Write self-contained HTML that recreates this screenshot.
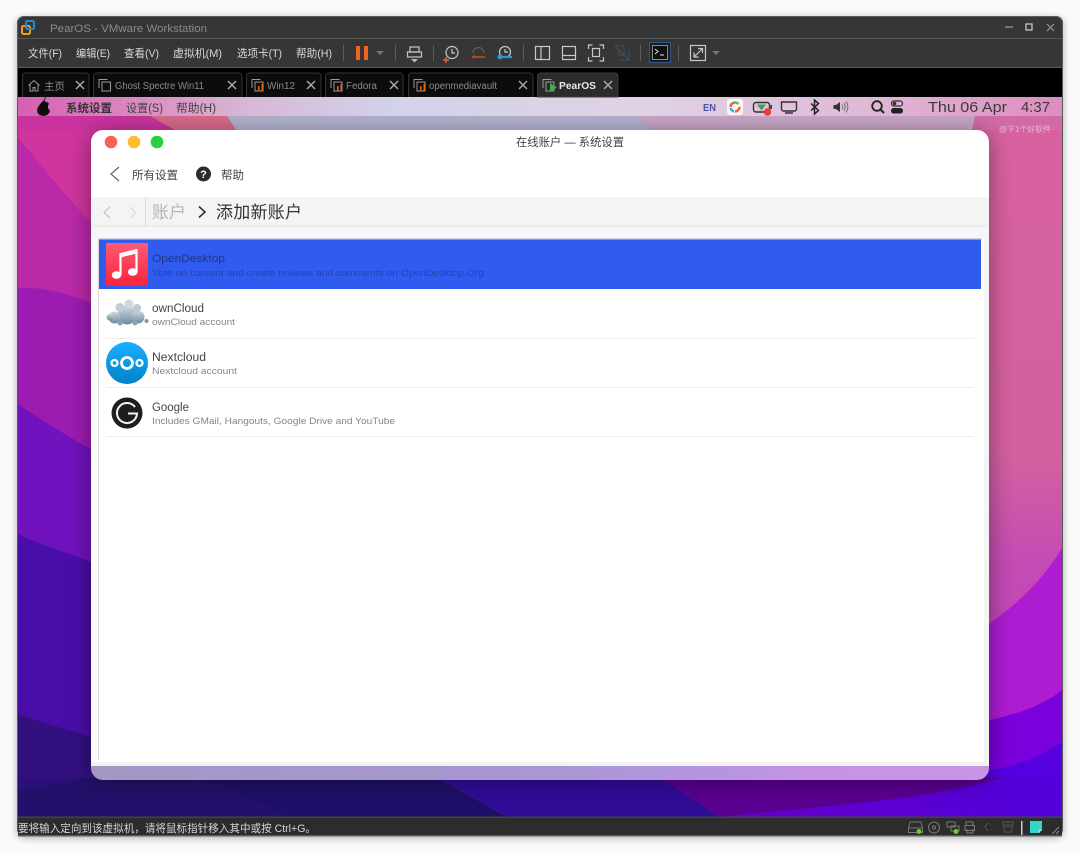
<!DOCTYPE html>
<html><head><meta charset="utf-8"><style>
html,body{margin:0;padding:0;background:#fafafa;width:1080px;height:853px;overflow:hidden}
svg{display:block}
text{font-family:"Liberation Sans","Noto Sans CJK SC",sans-serif}
.m{font-size:11px;fill:#d8d8d8}
.t{font-size:10px;fill:#8c8c8c}
.ic{fill:none;stroke:#c8c8c8;stroke-width:1.2}
.x{stroke:#a8a8a8;stroke-width:1.5;fill:none}
.d{font-size:11.5px;fill:#444}
.s{font-size:9.5px;fill:#858585}
</style></head><body>
<svg width="1080" height="853" viewBox="0 0 1080 853" xmlns="http://www.w3.org/2000/svg">
<defs>
<filter id="sh" x="-5%" y="-5%" width="110%" height="110%"><feGaussianBlur stdDeviation="4"/></filter>
<filter id="ws" x="-10%" y="-10%" width="120%" height="120%"><feGaussianBlur stdDeviation="12"/></filter>
<linearGradient id="mb" x1="0" x2="1" y1="0" y2="0">
<stop offset="0" stop-color="#d65fb2"/><stop offset=".12" stop-color="#da8cc0"/><stop offset=".22" stop-color="#d8b8d6"/><stop offset=".36" stop-color="#d2d2e8"/><stop offset=".6" stop-color="#e0d2e4"/><stop offset=".82" stop-color="#e0b8d6"/><stop offset="1" stop-color="#de8cbf"/>
</linearGradient>
<linearGradient id="r1" x1="0" x2="0" y1="0" y2="1"><stop offset="0" stop-color="#d8629f"/><stop offset=".5" stop-color="#d4609f"/><stop offset=".65" stop-color="#c44ab4"/><stop offset="1" stop-color="#c040b8"/></linearGradient>
<linearGradient id="strip" x1="0" x2="1" y1="0" y2="0"><stop offset="0" stop-color="#a397c6"/><stop offset=".45" stop-color="#a796d0"/><stop offset=".7" stop-color="#b595e0"/><stop offset=".8" stop-color="#c593e6"/><stop offset="1" stop-color="#c794e6"/></linearGradient>
<linearGradient id="br" x1="0" x2="1" y1="0" y2="0"><stop offset="0" stop-color="#6400c8"/><stop offset="1" stop-color="#5200dc"/></linearGradient>
<linearGradient id="mus" x1="0" x2="0" y1="0" y2="1"><stop offset="0" stop-color="#fb5c74"/><stop offset="1" stop-color="#fa233b"/></linearGradient>
<linearGradient id="nc" x1="0" x2="0" y1="0" y2="1"><stop offset="0" stop-color="#1cafff"/><stop offset="1" stop-color="#0082c9"/></linearGradient>
<linearGradient id="oc" x1="0" x2="0" y1="0" y2="1"><stop offset="0" stop-color="#cfdbe3"/><stop offset="1" stop-color="#6f8b9e"/></linearGradient>
<clipPath id="wp"><rect x="18" y="97" width="1044" height="720"/></clipPath>
</defs>

<!-- outer shadow + VM window -->
<rect x="17" y="18" width="1046" height="820" rx="7" fill="#000" opacity=".3" filter="url(#sh)"/>
<rect x="17" y="16" width="1046" height="820" rx="7" fill="#363636"/>
<rect x="17.5" y="16.5" width="1045" height="819" rx="7" fill="none" stroke="#5c5c5c"/>
<rect x="18" y="38" width="1044" height="1" fill="#565656"/>
<rect x="18" y="67" width="1044" height="1.5" fill="#5a5a5a"/>
<rect x="18" y="68" width="1044" height="29" fill="#000"/>

<!-- wallpaper -->
<g clip-path="url(#wp)">
<rect x="18" y="97" width="1044" height="720" fill="url(#r1)"/>
<!-- left stack -->
<rect x="18" y="97" width="200" height="720" fill="#d0359f"/>
<path d="M18 137C40 165 70 200 90 222L218 300V817H18Z" fill="#ba2aa8"/>
<path d="M18 288C40 286 70 294 90 303L218 340V817H18Z" fill="#9c1cb2"/>
<path d="M18 404C40 420 70 437 90 449L218 500V817H18Z" fill="#7012be"/>
<path d="M18 534C40 545 70 553 90 562L218 600V817H18Z" fill="#4a0ea8"/>
<path d="M18 714C40 722 70 730 90 737L218 790V817H18Z" fill="#33107f"/>
<!-- right stack -->
<path d="M980 630C1010 610 1040 585 1062 548V817H980Z" fill="#ae1cd2"/>
<path d="M980 722C1010 716 1040 708 1062 690V817H980Z" fill="#7a00dc"/>
<path d="M980 772C1010 768 1040 758 1062 742V817H980Z" fill="#5400e0"/>
<!-- bottom band -->
<rect x="18" y="778" width="190" height="39" fill="#2c0f78"/>
<path d="M90 778H203L285 817H18V790Z" fill="#24106a"/>
<path d="M203 778H438L508 817H285Z" fill="#1e1068"/>
<path d="M438 778H661L720 817H508Z" fill="#300c96"/>
<path d="M661 778H1000V817H720Z" fill="#5a0090"/>
<path d="M720 817C800 808 930 800 1000 778H1062V817Z" fill="url(#br)"/>
<!-- top band colours -->
<path d="M18 116H150L175 130H18Z" fill="#c9339f"/>
<path d="M150 116H227L236 130H175Z" fill="#d86a8c"/>
<path d="M227 116H640L650 130H236Z" fill="#b2b2d0"/>
<path d="M640 116H985L972 130H650Z" fill="#c8a6c6"/>
<path d="M975 116H1062V130H972Z" fill="#d26aa6"/>
<rect x="91" y="134" width="898" height="646" rx="12" fill="#000" opacity=".42" filter="url(#ws)"/>
<!-- menu bar -->
<rect x="18" y="97" width="1044" height="19" fill="url(#mb)"/>
</g>

<!-- title bar -->
<rect x="21" y="24" width="8" height="8" rx="1.5" fill="none" stroke="#f39a1e" stroke-width="2" transform="translate(1 2)"/>
<rect x="26" y="21" width="8" height="8" rx="1.5" fill="none" stroke="#1b8fd1" stroke-width="2"/>
<text x="50" y="32" font-size="11px" fill="#8a8a8a" textLength="157" lengthAdjust="spacingAndGlyphs">PearOS - VMware Workstation</text>
<path d="M1005 27h8" stroke="#9a9a9a" stroke-width="1.3"/>
<rect x="1026" y="24" width="6" height="6" fill="none" stroke="#c8c8c8" stroke-width="1.3"/>
<path d="M1047 24l7 7m0-7l-7 7" stroke="#9a9a9a" stroke-width="1.1"/>

<!-- menu -->
<text class="m" x="28" y="57" textLength="34" lengthAdjust="spacingAndGlyphs">文件(F)</text>
<text class="m" x="76" y="57" textLength="34" lengthAdjust="spacingAndGlyphs">编辑(E)</text>
<text class="m" x="124" y="57" textLength="35" lengthAdjust="spacingAndGlyphs">查看(V)</text>
<text class="m" x="173" y="57" textLength="49" lengthAdjust="spacingAndGlyphs">虚拟机(M)</text>
<text class="m" x="237" y="57" textLength="45" lengthAdjust="spacingAndGlyphs">选项卡(T)</text>
<text class="m" x="296" y="57" textLength="36" lengthAdjust="spacingAndGlyphs">帮助(H)</text>

<!-- toolbar -->
<g fill="#5c5c5c">
<rect x="343" y="45" width="1" height="16"/><rect x="395" y="45" width="1" height="16"/><rect x="433" y="45" width="1" height="16"/><rect x="523" y="45" width="1" height="16"/><rect x="640" y="45" width="1" height="16"/><rect x="678" y="45" width="1" height="16"/>
</g>
<rect x="356" y="46" width="4" height="14" fill="#f0641e"/><rect x="364" y="46" width="4" height="14" fill="#f0641e"/>
<path d="M376 51h8l-4 4z" fill="#777"/>
<g class="ic">
<rect x="410" y="47" width="9" height="5"/><rect x="407.5" y="52" width="14" height="5"/>
</g>
<path d="M411 59h7l-3.500 3.500z" fill="#bbb"/>
<circle cx="452" cy="52.500" r="6" class="ic"/><path d="M452 49v4h3" class="ic"/>
<path d="M446 57v6m-3-3h6" stroke="#e8642a" stroke-width="1.5"/>
<path d="M473 53a5.500 5.500 0 0 1 11 0" fill="none" stroke="#5e5e5e" stroke-width="1.2"/>
<path d="M472 57h13" stroke="#a8481e" stroke-width="2"/><path d="M472 57l3-2.500v5z" fill="#a8481e"/>
<circle cx="505" cy="52" r="5.500" class="ic"/><path d="M505 49v3h3" class="ic"/>
<path d="M499 57h13" stroke="#2a96da" stroke-width="2.200"/><circle cx="500" cy="57" r="2.500" fill="#2a96da"/>
<g class="ic">
<rect x="535.500" y="46.500" width="14" height="13"/><path d="M541 46.500v13"/>
<rect x="562.500" y="46.500" width="13" height="13"/><path d="M562.500 55.500h13"/>
<rect x="592.500" y="48.500" width="7" height="8"/><path d="M588.500 49v-4h4m7 0h4v4m0 8v4h-4m-7 0h-4v-4"/>
</g>
<g fill="none" stroke="#3e4e60" stroke-width="1.200"><path d="M615 46h9v9M629 50v10h-9M615 46l14 14M619 50v5h5"/></g>
<rect x="649.500" y="42.500" width="21" height="20" rx="1.500" fill="#1e1e1e" stroke="#2e5a86"/>
<rect x="652.500" y="45.500" width="15" height="14" fill="#101010" stroke="#aaa" stroke-width=".8"/>
<path d="M655 49l3 2.500-3 2.500M660 55h4" fill="none" stroke="#e0e0e0" stroke-width="1"/>
<rect x="690.500" y="45.500" width="15" height="15" class="ic"/>
<path d="M694 57l8-8M698 48.500h4.500v4.500M694 52.500v4.500h4.500" class="ic" stroke-width="1"/>
<path d="M712 51h8l-4 4z" fill="#777"/>

<!-- tabs -->
<g fill="#0c0c0c" stroke="#333">
<path d="M22.500 97V76a3 3 0 0 1 3-3H86a3 3 0 0 1 3 3V97"/>
<path d="M93.500 97V76a3 3 0 0 1 3-3H239a3 3 0 0 1 3 3V97"/>
<path d="M246.500 97V76a3 3 0 0 1 3-3H318a3 3 0 0 1 3 3V97"/>
<path d="M325.500 97V76a3 3 0 0 1 3-3H400a3 3 0 0 1 3 3V97"/>
<path d="M408.500 97V76a3 3 0 0 1 3-3H530a3 3 0 0 1 3 3V97"/>
</g>
<path d="M537.500 97V76a3 3 0 0 1 3-3H615a3 3 0 0 1 3 3V97Z" fill="#2b2b2b" stroke="#3c3c3c"/>
<path d="M28.500 85.500l5.500-5 5.500 5M30 84.500v6.500h3v-3.500h2v3.500h3v-6.500" fill="none" stroke="#9a9a9a"/>
<text class="t" x="44" y="90" textLength="21" lengthAdjust="spacingAndGlyphs">主页</text>
<g fill="none" stroke="#9a9a9a" stroke-width="1">
<path d="M99 88v-8.500h8.500"/><rect x="102" y="82" width="8.500" height="9"/>
<path d="M252 88v-8.500h8.500"/><rect x="255" y="82" width="8" height="9"/>
<path d="M331 88v-8.500h8.500"/><rect x="334" y="82" width="8" height="9"/>
<path d="M414 88v-8.500h8.500"/><rect x="417" y="82" width="8" height="9"/>
<path d="M543 88v-8.500h8.500"/><rect x="546" y="82" width="8" height="9"/>
</g>
<g fill="#e8641e">
<rect x="258" y="86" width="1.500" height="5.500"/><rect x="261.500" y="84" width="1.500" height="7.500"/>
<rect x="337" y="86" width="1.500" height="5.500"/><rect x="340.500" y="84" width="1.500" height="7.500"/>
<rect x="420" y="86" width="1.500" height="5.500"/><rect x="423.500" y="84" width="1.500" height="7.500"/>
</g>
<path d="M550 83l7 4.500-7 4.500z" fill="#35b24a"/>
<text class="t" x="115" y="89" textLength="89" lengthAdjust="spacingAndGlyphs">Ghost Spectre Win11</text>
<text class="t" x="267" y="89" textLength="28" lengthAdjust="spacingAndGlyphs">Win12</text>
<text class="t" x="346" y="89" textLength="31" lengthAdjust="spacingAndGlyphs">Fedora</text>
<text class="t" x="429" y="89" textLength="68" lengthAdjust="spacingAndGlyphs">openmediavault</text>
<text x="559" y="89" font-size="10px" font-weight="bold" fill="#e8e8e8" textLength="37" lengthAdjust="spacingAndGlyphs">PearOS</text>
<g class="x">
<path d="M76 81l8 8m0-8l-8 8"/><path d="M228 81l8 8m0-8l-8 8"/><path d="M307 81l8 8m0-8l-8 8"/><path d="M390 81l8 8m0-8l-8 8"/><path d="M519 81l8 8m0-8l-8 8"/><path d="M604 81l8 8m0-8l-8 8"/>
</g>

<!-- guest menu bar -->
<path d="M43.500 101c-3 3-6 6-6 9.500 0 3 2.500 5 6 5s6-2.500 6-5c-1-.8-2-1.800-2-3.500s1-2.500 1-3.500c-1.500-1-3-1.500-5-2.500zM44 101c.3-1.500 1-3 2-4" fill="#0c0c0c" stroke="#0c0c0c" stroke-width=".7"/>
<text x="66" y="112" font-size="11.500px" font-weight="bold" fill="#333" textLength="46">系统设置</text>
<text x="126" y="112" font-size="11.500px" fill="#444" textLength="37" lengthAdjust="spacingAndGlyphs">设置(S)</text>
<text x="176" y="112" font-size="11.500px" fill="#444" textLength="40" lengthAdjust="spacingAndGlyphs">帮助(H)</text>
<text x="703" y="111" font-size="10.500px" font-weight="bold" fill="#4a55a5" textLength="13" lengthAdjust="spacingAndGlyphs">EN</text>
<rect x="727" y="99" width="16" height="16" rx="3" fill="#f8f4f8"/>
<circle cx="735" cy="107" r="4.500" fill="none" stroke="#e46a3a" stroke-width="2.500" stroke-dasharray="7 7"/>
<circle cx="735" cy="107" r="4.500" fill="none" stroke="#3ab0d8" stroke-width="2.500" stroke-dasharray="5 23.300" stroke-dashoffset="-8"/>
<circle cx="735" cy="107" r="4.500" fill="none" stroke="#60c060" stroke-width="2.500" stroke-dasharray="5 23.300" stroke-dashoffset="-20"/>
<rect x="753.500" y="102.500" width="16" height="9.500" rx="2.500" fill="none" stroke="#333" stroke-width="1.400"/>
<path d="M757 104.500h9l-4.500 6z" fill="#3ba04a"/><rect x="770.500" y="105" width="1.500" height="4" fill="#333"/>
<circle cx="767.500" cy="112" r="3.700" fill="#ee3a3a"/>
<path d="M781.500 102h15v7a2 2 0 0 1-2 2h-11a2 2 0 0 1-2-2zM785 113h8" fill="none" stroke="#333" stroke-width="1.400"/>
<path d="M811 103.500l7.500 7-4 3.500v-14l4 3.500-7.500 7" fill="none" stroke="#222" stroke-width="1.500"/>
<path d="M833.500 105h2.500l4-3v10l-4-3h-2.500z" fill="#333"/>
<path d="M842 104.500a4 4 0 0 1 0 5M844 103a7 7 0 0 1 0 8M846 101.500a9 9 0 0 1 0 11" fill="none" stroke="#666" stroke-width=".9"/>
<circle cx="877" cy="106" r="4.800" fill="none" stroke="#222" stroke-width="1.800"/><path d="M880.500 109.500l3.500 3.500" stroke="#222" stroke-width="2"/>
<rect x="891.500" y="101" width="11" height="5" rx="2.500" fill="none" stroke="#333" stroke-width="1.200"/><circle cx="894.500" cy="103.500" r="1.800" fill="#333"/>
<rect x="891" y="108" width="12" height="5.500" rx="2.700" fill="#222"/>
<text x="928" y="112" font-size="15px" fill="#3c3c3c" textLength="79" lengthAdjust="spacingAndGlyphs">Thu 06 Apr</text>
<text x="1021" y="112" font-size="15px" fill="#3c3c3c" textLength="29" lengthAdjust="spacingAndGlyphs">4:37</text>
<text x="999" y="132" font-size="8px" fill="#f0b4d4" textLength="52" lengthAdjust="spacingAndGlyphs">@下1个好软件</text>

<!-- settings window -->
<path d="M91 760H989V768a12 12 0 0 1-12 12H103a12 12 0 0 1-12-12Z" fill="url(#strip)"/>
<path d="M91 766V142a12 12 0 0 1 12-12H977a12 12 0 0 1 12 12V766Z" fill="#fff"/>
<rect x="91" y="762" width="898" height="4" fill="#f2f2f2"/>
<circle cx="111" cy="142" r="6.300" fill="#f96057"/><circle cx="134" cy="142" r="6.300" fill="#fdbd2e"/><circle cx="157" cy="142" r="6.300" fill="#28cf41"/>
<text x="516" y="146" font-size="11.500px" fill="#444" textLength="108" lengthAdjust="spacingAndGlyphs">在线账户 — 系统设置</text>
<path d="M119 167l-8 7 8 7" fill="none" stroke="#666" stroke-width="1.200"/>
<text class="d" x="132" y="179" textLength="46">所有设置</text>
<circle cx="203.500" cy="174" r="7.500" fill="#2c2c2c"/>
<text x="203.500" y="178" font-size="11px" font-weight="bold" fill="#fff" text-anchor="middle">?</text>
<text class="d" x="221" y="179" textLength="23">帮助</text>
<rect x="91" y="197" width="898" height="29" fill="#f4f4f4"/>
<rect x="91" y="225.500" width="898" height="1" fill="#e6e6e6"/>
<rect x="91" y="226.500" width="898" height="12" fill="#f6f6f6"/>
<rect x="145" y="197" width="1" height="29" fill="#dcdcdc"/>
<path d="M110 207l-6 5.500 6 5.500" fill="none" stroke="#c4c4c4" stroke-width="1.200"/>
<path d="M130 207l6 5.500-6 5.500" fill="none" stroke="#dedede" stroke-width="1.200"/>
<text x="152" y="218" font-size="17px" fill="#b4b4b4" textLength="34">账户</text>
<path d="M199 206.500l6 5.500-6 5.500" fill="none" stroke="#333" stroke-width="1.600"/>
<text x="216" y="218" font-size="17px" fill="#333" textLength="86">添加新账户</text>

<!-- list -->
<rect x="98" y="238" width="886" height="524" fill="#fff"/>
<rect x="984" y="238" width="5" height="524" fill="#f4f4f4"/>
<rect x="91" y="238" width="7" height="524" fill="#fbfbfb"/>
<rect x="98" y="238" width="1" height="522" fill="#d8d8d8"/>
<rect x="98" y="238" width="884" height="1.500" fill="#cfd4e6"/>
<rect x="99" y="239.500" width="882" height="49.500" fill="#2f5bef"/>
<rect x="106" y="243" width="42" height="43" fill="url(#mus)"/>
<path d="M120.500 253l16-4v4.500l-16 4z" fill="#fff"/>
<path d="M120.500 253v22M136.500 249v23" fill="none" stroke="#fff" stroke-width="2.200"/>
<ellipse cx="116.500" cy="275" rx="4.800" ry="3.800" fill="#fff"/><ellipse cx="132.700" cy="272" rx="4.800" ry="3.800" fill="#fff"/>
<text x="152" y="262" font-size="11px" fill="#25367f" textLength="73" lengthAdjust="spacingAndGlyphs">OpenDesktop</text>
<text x="152" y="276" font-size="9.500px" fill="#2643b0" textLength="332" lengthAdjust="spacingAndGlyphs">Vote on content and create reviews and comments on OpenDesktop.Org</text>

<g fill="url(#oc)">
<circle cx="127" cy="315" r="9.500"/><circle cx="114.500" cy="317.500" r="6"/><circle cx="138" cy="317" r="6.500"/>
<circle cx="120" cy="307.500" r="4.500" fill="#c0ced8"/><circle cx="129" cy="304" r="4.500" fill="#ccd8e0"/><circle cx="137" cy="308" r="4" fill="#bccad4"/>
<circle cx="110" cy="317" r="3.500"/><circle cx="146.500" cy="321" r="2" fill="#7d97a8"/><circle cx="120" cy="323" r="2.500" fill="#8aa2b2"/><circle cx="135" cy="323" r="2.500" fill="#8aa2b2"/>
</g>
<text class="d" x="152" y="312" font-size="11px" textLength="52" lengthAdjust="spacingAndGlyphs">ownCloud</text>
<text class="s" x="152" y="325" textLength="83" lengthAdjust="spacingAndGlyphs">ownCloud account</text>
<rect x="106" y="338" width="868" height="1" fill="#eee"/>

<circle cx="127" cy="363" r="21" fill="url(#nc)"/>
<g fill="none" stroke="#fff"><circle cx="127" cy="363" r="5.500" stroke-width="2.800"/><circle cx="114.500" cy="363" r="3" stroke-width="2.300"/><circle cx="139.500" cy="363" r="3" stroke-width="2.300"/></g>
<text class="d" x="152" y="361" textLength="54" lengthAdjust="spacingAndGlyphs">Nextcloud</text>
<text class="s" x="152" y="374" textLength="85" lengthAdjust="spacingAndGlyphs">Nextcloud account</text>
<rect x="106" y="387" width="868" height="1" fill="#eee"/>

<circle cx="127" cy="413" r="15.500" fill="#1e1e1e"/>
<path d="M135 407a10 10 0 1 0 2 6.500h-9" fill="none" stroke="#f4f4f4" stroke-width="2"/>
<text class="d" x="152" y="411" textLength="37" lengthAdjust="spacingAndGlyphs">Google</text>
<text class="s" x="152" y="424" textLength="243" lengthAdjust="spacingAndGlyphs">Includes GMail, Hangouts, Google Drive and YouTube</text>
<rect x="106" y="436" width="868" height="1" fill="#eee"/>

<!-- status bar -->
<rect x="18" y="817" width="1044" height="18" fill="#2c2c2c"/>
<rect x="18" y="816.500" width="1044" height="1.500" fill="#444"/>
<rect x="18" y="835" width="1044" height="1.500" fill="#5c5c5c"/>
<text x="18" y="832" font-size="11px" fill="#d4d4d4" textLength="298" lengthAdjust="spacingAndGlyphs">要将输入定向到该虚拟机，请将鼠标指针移入其中或按 Ctrl+G。</text>
<g fill="none" stroke="#777" stroke-width="1">
<path d="M910 822h11l1.500 6v4.500h-14V828zM908.500 828h14"/>
<circle cx="934" cy="827.500" r="5.500"/><circle cx="934" cy="827.500" r="1.500"/>
<rect x="947" y="822" width="8" height="5"/><rect x="951" y="826" width="8" height="5"/>
<path d="M966 825v-3h7v3M965 825.500h9.500v5h-9.500zM967 829v4h6v-4"/>
</g>
<g fill="none" stroke="#555" stroke-width="1">
<path d="M988 823l-3 4 3 4M991 825v1M991 829v1"/>
<path d="M1003 822h10v3h-10zM1004 825v7h8v-7M1006 827h4"/>
</g>
<circle cx="919" cy="831.500" r="2.500" fill="#70cc20"/><circle cx="956" cy="831.500" r="2.500" fill="#70cc20"/>
<rect x="1021" y="821" width="1.500" height="14" fill="#ccc"/>
<path d="M1030 821h12v9l-3 3h-9z" fill="#30d8c8"/>
<path d="M1039 833v-3h3" fill="none" stroke="#eee" stroke-width=".7"/>
<path d="M1052 834l7-7M1056 834l3-3" stroke="#888" stroke-width="1"/>
</svg>
</body></html>
